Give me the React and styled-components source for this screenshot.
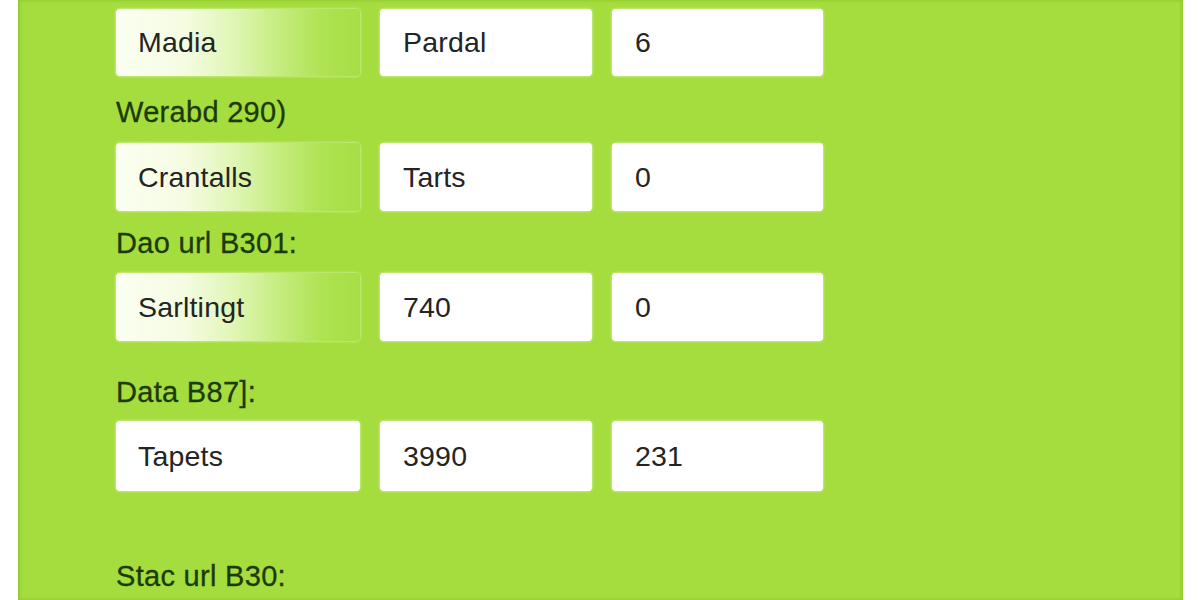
import React from 'react';
import styled, { createGlobalStyle } from 'styled-components';

const GlobalStyle = createGlobalStyle`
  html, body {
    margin: 0;
    padding: 0;
    background: #ffffff;
    font-family: "Liberation Sans", Arial, sans-serif;
  }
`;

const Page = styled.div`
  display: flex;
  width: 1200px;
  height: 600px;
  overflow: hidden;
  background: #ffffff;
`;

const Panel = styled.div`
  display: flex;
  flex-direction: column;
  margin-left: 18px;
  width: 1165px;
  height: 600px;
  padding: 9px 0 0 98px;
  box-sizing: border-box;
  overflow: hidden;
  background: #a4dd3d;
  box-shadow: inset 2px 0 3px rgba(140, 190, 40, 0.6), inset -2px 0 3px rgba(140, 190, 40, 0.6);
`;

const Row = styled.div`
  display: grid;
  flex-shrink: 0;
  grid-template-columns: 244px 212px 211px;
  column-gap: 20px;
  height: ${p => p.$h || 67}px;
`;

const Field = styled.div`
  display: flex;
  align-items: center;
  padding-left: ${p => p.$pad || 23}px;
  border-radius: 4px;
  font-size: 28.5px;
  letter-spacing: 0.2px;
  color: #242424;
  background: ${p => p.$fade
    ? 'linear-gradient(90deg, #fbfff2 0%, #f5fce2 28%, #e0f6b6 48%, #c6ed82 66%, #afe353 84%, #a7de44 100%)'
    : '#ffffff'};
  box-shadow: 0 0 3px rgba(255, 255, 235, 0.8);
`;

const Label = styled.div`
  flex-shrink: 0;
  margin: ${p => p.$top}px 0 ${p => p.$bottom}px;
  height: 30px;
  line-height: 30px;
  font-size: 29px;
  letter-spacing: 0.3px;
  color: #1c3a06;
  -webkit-text-stroke: 0.3px #1c3a06;
`;

const rows = [
  { cells: ['Madia', 'Pardal', '6'], fade: true, h: 67 },
  { label: 'Werabd 290)', top: 21, bottom: 16 },
  { cells: ['Crantalls', 'Tarts', '0'], fade: true, h: 68 },
  { label: 'Dao url B301:', top: 17, bottom: 15 },
  { cells: ['Sarltingt', '740', '0'], fade: true, h: 68 },
  { label: 'Data B87]:', top: 36, bottom: 14 },
  { cells: ['Tapets', '3990', '231'], fade: false, h: 70 },
  { label: 'Stac url B30:', top: 70, bottom: 0 },
];

export default function App() {
  return (
    <>
      <GlobalStyle />
      <Page>
        <Panel>
          {rows.map((r, i) =>
            r.label ? (
              <Label key={i} $top={r.top} $bottom={r.bottom}>{r.label}</Label>
            ) : (
              <Row key={i} $h={r.h}>
                {r.cells.map((c, j) => (
                  <Field key={j} $fade={j === 0 && r.fade} $pad={j === 0 ? 22 : 23}>{c}</Field>
                ))}
              </Row>
            )
          )}
        </Panel>
      </Page>
    </>
  );
}
